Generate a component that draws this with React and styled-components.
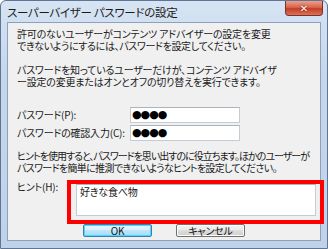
import React from "react";
import styled, { createGlobalStyle } from "styled-components";

const Global = createGlobalStyle`
  html, body { margin: 0; padding: 0; background: #ffffff; }
  body {
    font-family: "Noto Sans CJK JP", "Noto Sans", sans-serif;
    font-feature-settings: "palt";
    -webkit-font-smoothing: none;
  }
  * { box-sizing: border-box; }
`;

const Window = styled.div`
  width: 328px;
  height: 249px;
  border: 1px solid #5f7594;
  border-radius: 6px 6px 0 0;
  background: linear-gradient(180deg, #d6e4f3 0%, #c6d7eb 30%, #c0d2e8 100%);
  display: flex;
  flex-direction: column;
  padding: 0 6px 7px 6px;
`;

const TitleBar = styled.div`
  height: 21px;
  display: flex;
  justify-content: space-between;
  align-items: flex-start;
`;

const Title = styled.div`
  font-size: 11.5px;
  line-height: 14px;
  color: #1b1b1b;
  padding-top: 4px;
  letter-spacing: -0.3px;
`;

const Close = styled.div`
  width: 38px;
  height: 15px;
  margin-right: -2px;
  border: 1px solid #7a3328;
  border-top: none;
  border-radius: 0 0 4px 4px;
  background: linear-gradient(180deg, #eba08d 0%, #d9654d 45%, #c63c25 55%, #d9735c 100%);
  display: flex;
  align-items: center;
  justify-content: center;
  color: #fff;
  font-family: "DejaVu Sans", sans-serif;
  font-weight: bold;
  font-size: 10px;
  text-shadow: 0 0 2px #5a1208;
`;

const Panel = styled.div`
  flex: 1;
  background: #f0f0f0;
  border: 1px solid #8da1bd;
  padding: 5px 0 3px 9px;
  display: flex;
  flex-direction: column;
  font-size: 10px;
  line-height: 12px;
  color: #1a1a1a;
  letter-spacing: -0.2px;
`;

const Para = styled.p`
  margin: 0 0 ${(p) => p.$gap}px 0;
  white-space: nowrap;
`;

const Line = styled.span`
  display: block;
  letter-spacing: ${(p) => (p.$ls !== undefined ? p.$ls : -0.2)}px;
`;

const FieldRow = styled.div`
  display: flex;
  align-items: center;
  height: 16px;
  margin-bottom: ${(p) => p.$gap || 0}px;
`;

const Label = styled.div`
  width: ${(p) => p.$w}px;
  flex: none;
  white-space: nowrap;
`;

const Input = styled.div`
  width: 110px;
  height: 16px;
  background: #ffffff;
  border: 1px solid #c4cbd4;
  border-top-color: #abb3bd;
  display: flex;
  align-items: center;
  padding-left: 1px;
  font-family: "DejaVu Sans", sans-serif;
  font-size: 11px;
  letter-spacing: -1px;
  color: #000;
`;

const HintRow = styled.div`
  display: flex;
  align-items: flex-start;
  margin-right: -4px;
`;

const HintLabel = styled.div`
  width: 50px;
  flex: none;
  padding-top: 1px;
  white-space: nowrap;
`;

const RedFrame = styled.div`
  flex: 1;
  border: 4px solid #ff0000;
  padding: 0 4px 4px 5px;
`;

const HintInput = styled.div`
  height: 32px;
  background: #ffffff;
  border: 1px solid #c4cbd4;
  border-top-color: #abb3bd;
  padding: 1px 3px;
  white-space: nowrap;
`;

const Buttons = styled.div`
  display: flex;
  justify-content: center;
  gap: 24px;
  padding-right: 9px;
`;

const Button = styled.div`
  width: 69px;
  height: 13px;
  border: 1px solid #707070;
  border-radius: 2px;
  background: linear-gradient(180deg, #f2f2f2 0%, #ebebeb 45%, #dddddd 50%, #cfcfcf 100%);
  box-shadow: inset 0 0 0 1px #fcfcfc;
  display: flex;
  align-items: center;
  justify-content: center;
  font-size: 10px;
  line-height: 11px;
  color: #111;
  ${(p) =>
    p.$default &&
    "border-color: #3c7fb1; box-shadow: inset 0 0 0 1px #48d7fd; background: linear-gradient(180deg, #eaf6fd 0%, #d9f0fc 45%, #bee6fd 50%, #a7d9f5 100%);"}
`;

export default function App() {
  return (
    <>
      <Global />
      <Window>
        <TitleBar>
          <Title>スーパーバイザー パスワードの設定</Title>
          <Close>✕</Close>
        </TitleBar>
        <Panel>
          <Para $gap={12}>
            <Line>許可のないユーザーがコンテンツ アドバイザーの設定を変更</Line>
            <Line $ls={-0.35}>できないようにするには、パスワードを設定してください。</Line>
          </Para>
          <Para $gap={19}>
            <Line>パスワードを知っているユーザーだけが、コンテンツ アドバイザ</Line>
            <Line>ー設定の変更またはオンとオフの切り替えを実行できます。</Line>
          </Para>
          <FieldRow $gap={2}>
            <Label $w={113}>パスワード(P):</Label>
            <Input>●●●●</Input>
          </FieldRow>
          <FieldRow $gap={9}>
            <Label $w={113}>パスワードの確認入力(C):</Label>
            <Input>●●●●</Input>
          </FieldRow>
          <Para $gap={6}>
            <Line $ls={-0.98}>ヒントを使用すると、パスワードを思い出すのに役立ちます。ほかのユーザーが</Line>
            <Line $ls={-0.65}>パスワードを簡単に推測できないようなヒントを設定してください。</Line>
          </Para>
          <HintRow>
            <HintLabel>ヒント(H):</HintLabel>
            <RedFrame>
              <HintInput>好きな食べ物</HintInput>
            </RedFrame>
          </HintRow>
          <Buttons>
            <Button $default>OK</Button>
            <Button>キャンセル</Button>
          </Buttons>
        </Panel>
      </Window>
    </>
  );
}
